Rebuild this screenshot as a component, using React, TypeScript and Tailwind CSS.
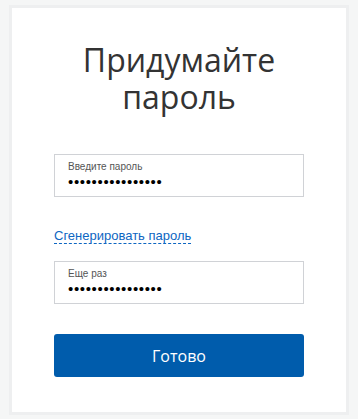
import { useState } from "react";

const dots = "••••••••••••••••";

function PasswordField({ label, value }: { label: string; value: string }) {
  return (
    <div className="h-[43px] border border-[#d0d2d6] bg-white px-[13px] pt-[6px]">
      <div className="text-[10px] leading-[12px] text-[#555]">{label}</div>
      <div className="mt-[1px] text-[15px] leading-[16px] tracking-[0.65px] text-black">
        {value}
      </div>
    </div>
  );
}

export default function App() {
  const [pwd] = useState(dots);
  return (
    <div className="min-h-[419px] w-[358px] bg-[#f5f6f6] pt-[5px] font-['Liberation_Sans',Arial,sans-serif]">
      <div className="mx-[9px] border-[3px] border-[#eeeff0] bg-white px-[42px] pb-[35px] pt-[33px]">
        <h1 className="text-center font-['Open_Sans',sans-serif] text-[32px] font-normal leading-[37px] text-[#333]">
          Придумайте
          <br />
          пароль
        </h1>

        <div className="mt-[39px]">
          <PasswordField label="Введите пароль" value={pwd} />
        </div>

        <div className="mt-[26px] h-[18px]">
          <a
            href="#"
            className="border-b border-dashed border-[#0d66c2] text-[13px] leading-[16px] text-[#0d66c2]"
          >
            Сгенерировать пароль
          </a>
        </div>

        <div className="mt-[20px]">
          <PasswordField label="Еще раз" value={pwd} />
        </div>

        <button className="mt-[30px] flex h-[43px] w-full items-center justify-center rounded-[3px] bg-[#005cac] font-['Open_Sans',sans-serif] text-[16px] text-white">
          Готово
        </button>
      </div>
    </div>
  );
}
